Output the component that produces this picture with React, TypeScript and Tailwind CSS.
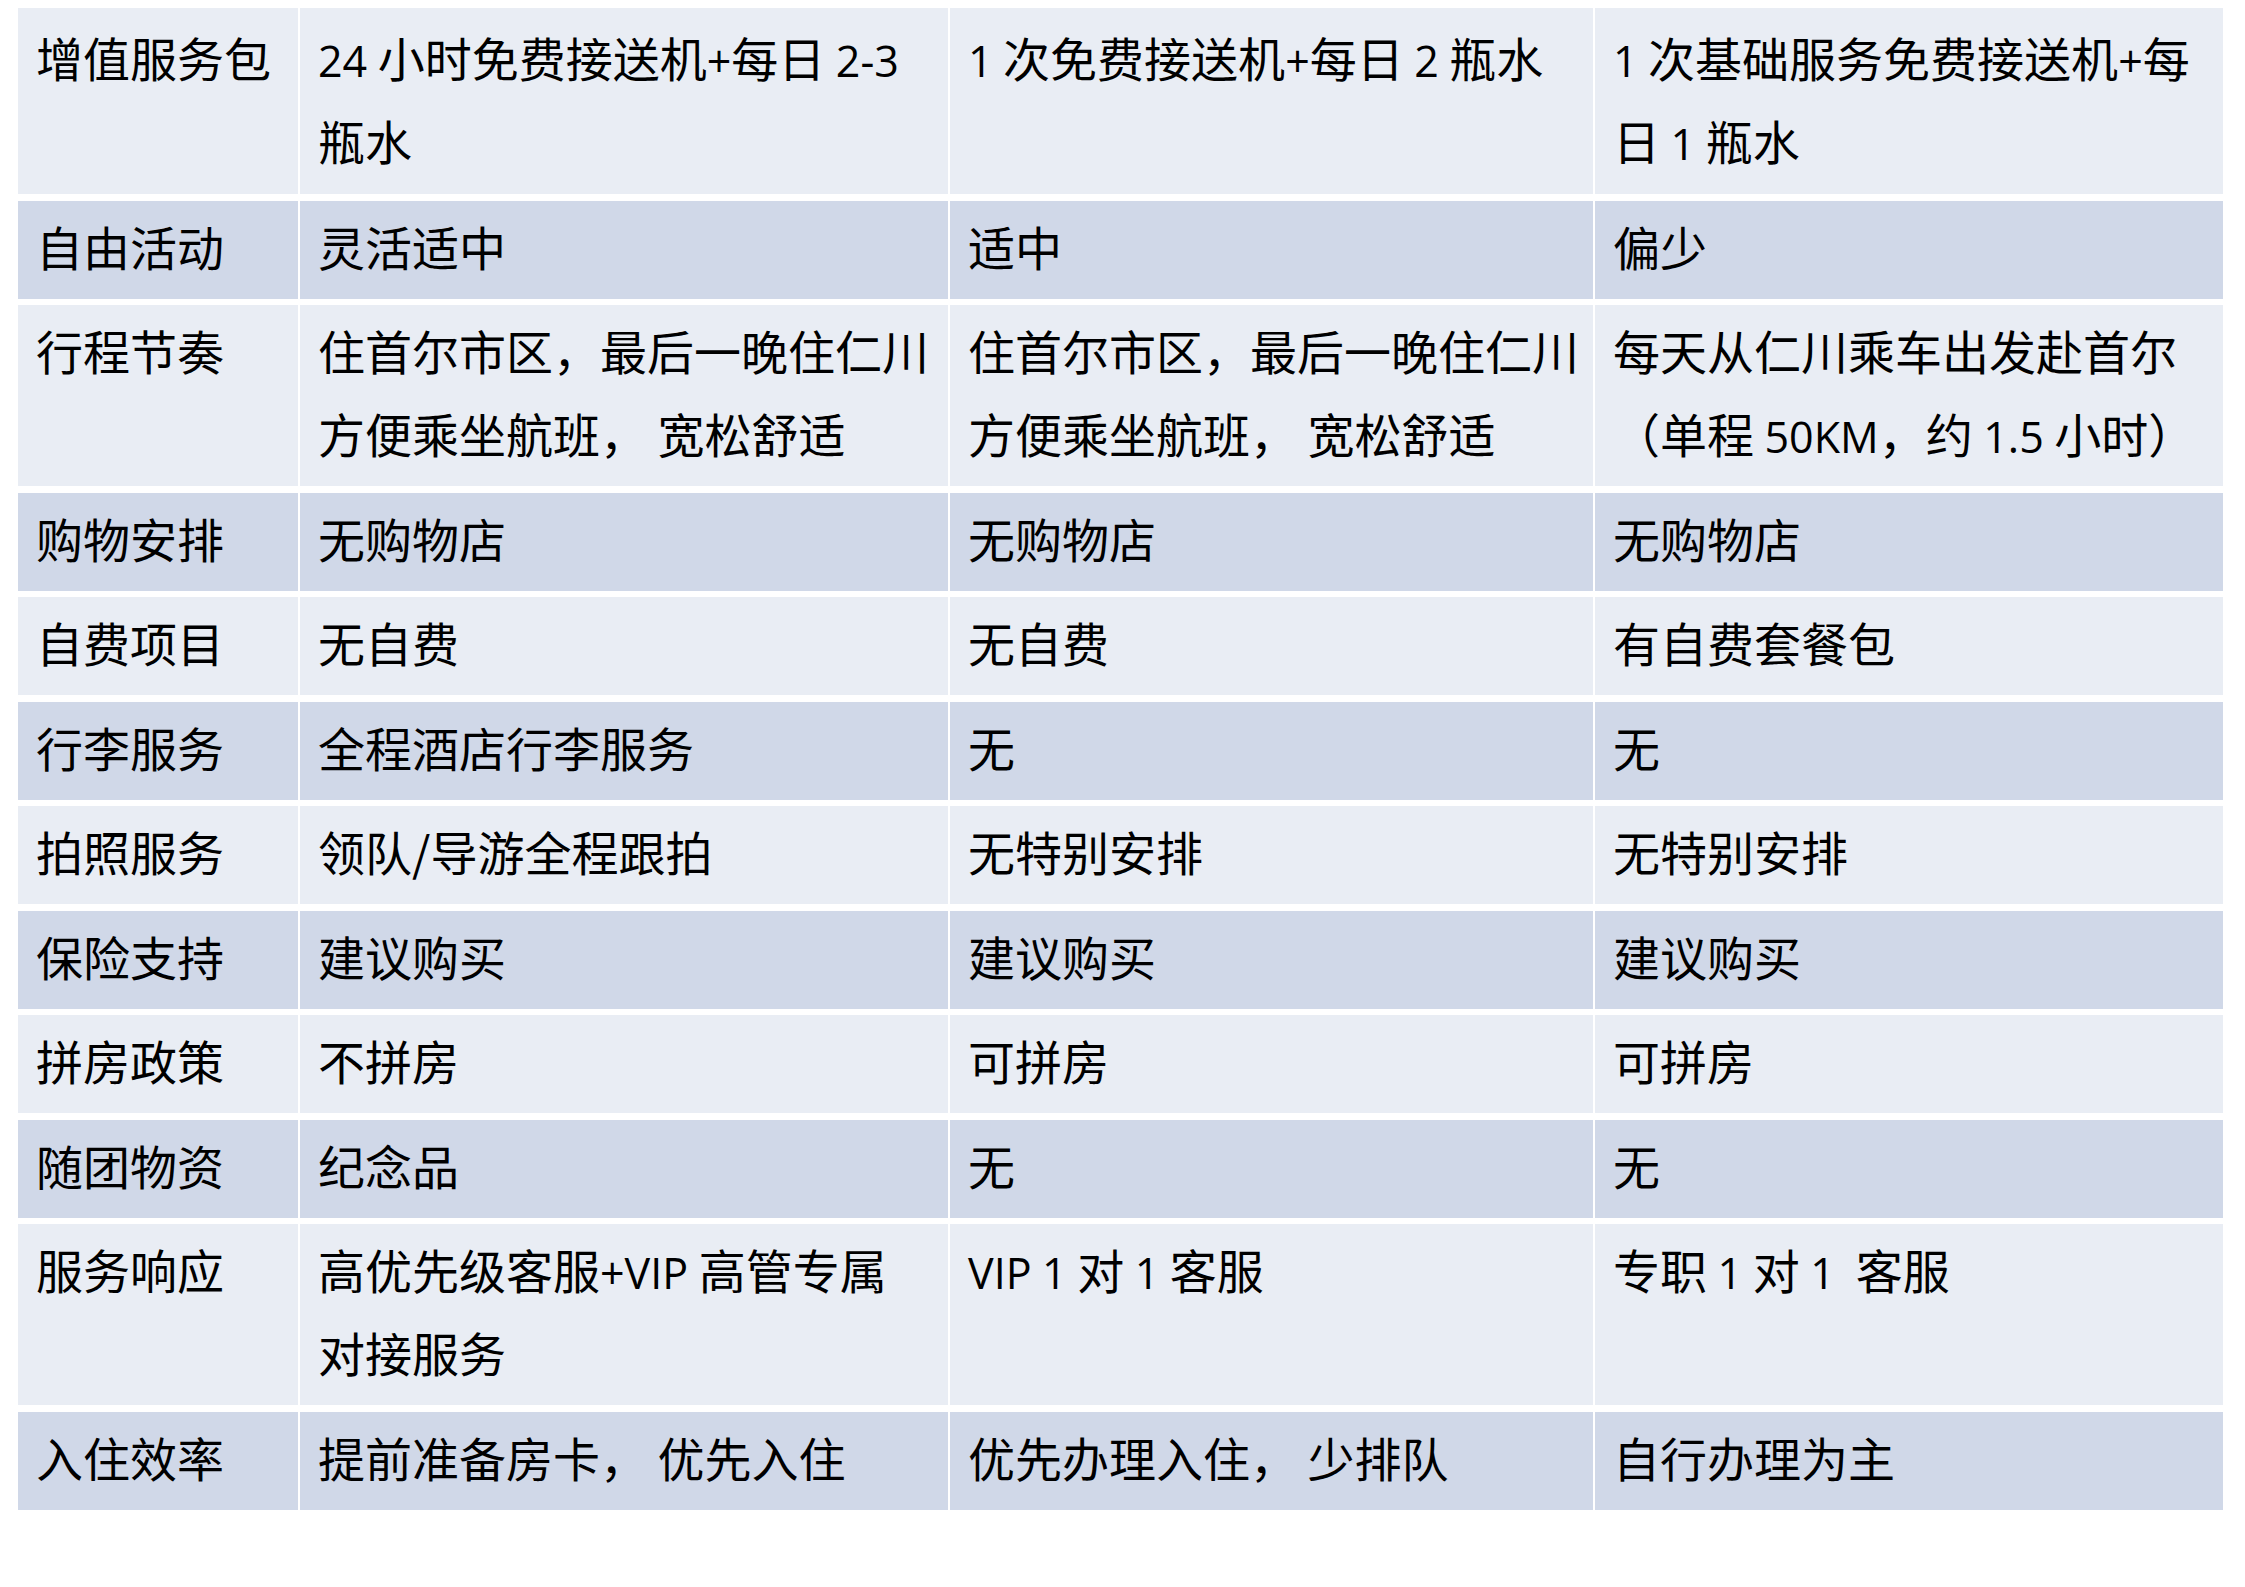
import { Fragment } from 'react'

type Row = { label: string; cells: string[][] }

const rows: Row[] = [
  {
    label: '增值服务包',
    cells: [['24 小时免费接送机+每日 2-3', '瓶水'], ['1 次免费接送机+每日 2 瓶水'], ['1 次基础服务免费接送机+每', '日 1 瓶水']],
  },
  { label: '自由活动', cells: [['灵活适中'], ['适中'], ['偏少']] },
  {
    label: '行程节奏',
    cells: [
      ['住首尔市区，最后一晚住仁川', '方便乘坐航班， 宽松舒适'],
      ['住首尔市区，最后一晚住仁川', '方便乘坐航班， 宽松舒适'],
      ['每天从仁川乘车出发赴首尔', '（单程 50KM，约 1.5 小时）'],
    ],
  },
  { label: '购物安排', cells: [['无购物店'], ['无购物店'], ['无购物店']] },
  { label: '自费项目', cells: [['无自费'], ['无自费'], ['有自费套餐包']] },
  { label: '行李服务', cells: [['全程酒店行李服务'], ['无'], ['无']] },
  { label: '拍照服务', cells: [['领队/导游全程跟拍'], ['无特别安排'], ['无特别安排']] },
  { label: '保险支持', cells: [['建议购买'], ['建议购买'], ['建议购买']] },
  { label: '拼房政策', cells: [['不拼房'], ['可拼房'], ['可拼房']] },
  { label: '随团物资', cells: [['纪念品'], ['无'], ['无']] },
  {
    label: '服务响应',
    cells: [['高优先级客服+VIP 高管专属', '对接服务'], ['VIP 1 对 1 客服'], ['专职 1 对 1  客服']],
  },
  { label: '入住效率', cells: [['提前准备房卡， 优先入住'], ['优先办理入住， 少排队'], ['自行办理为主']] },
]

// latin runs are set a bit smaller, the source used a narrow latin face
function Line({ text }: { text: string }) {
  const parts = text.split(/([A-Za-z0-9+\-.]+)/)
  return (
    <div className="whitespace-pre">
      {parts.map((p, i) =>
        i % 2 === 1 ? (
          <span key={i} className="font-['Open_Sans','Noto_Sans_CJK_SC',sans-serif] text-[43px] font-medium leading-none">
            {p}
          </span>
        ) : (
          <Fragment key={i}>{p}</Fragment>
        ),
      )}
    </div>
  )
}

export default function App() {
  return (
    <div className="min-h-screen bg-white pt-[8px] pl-[18px] font-['Noto_Sans_CJK_SC',sans-serif] text-[47px] leading-[83px] text-black">
      <div className="grid grid-cols-[280px_648px_643px_628px] gap-x-[2px] gap-y-[6.5px]">
        {rows.map((row, r) => {
          const bg = r % 2 === 0 ? 'bg-[#e9edf4]' : 'bg-[#d0d8e8]'
          const pad = r === 0 ? 'pt-[7px] pb-[13px]' : 'pt-[3px] pb-[12px]'
          return (
            <Fragment key={row.label}>
              <div className={`${bg} ${pad} pl-[18px]`}>
                <Line text={row.label} />
              </div>
              {row.cells.map((lines, c) => (
                <div key={c} className={`${bg} ${pad} pl-[18px]`}>
                  {lines.map((l, k) => (
                    <Line key={k} text={l} />
                  ))}
                </div>
              ))}
            </Fragment>
          )
        })}
      </div>
    </div>
  )
}
